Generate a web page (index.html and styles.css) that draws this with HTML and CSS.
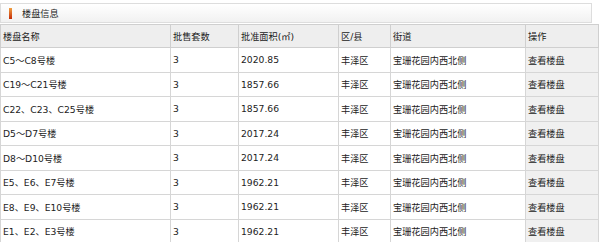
FILE: index.html
```html
<!DOCTYPE html>
<html lang="zh">
<head>
<meta charset="utf-8">
<link rel="stylesheet" href="styles.css">
</head>
<body>
<div class="panel">
  <div class="title"><span class="mark"></span><span class="title-text">楼盘信息</span></div>
  <table class="grid">
    <colgroup>
      <col class="c1"><col class="c2"><col class="c3"><col class="c4"><col class="c5"><col class="c6">
    </colgroup>
    <thead>
      <tr><th>楼盘名称</th><th>批售套数</th><th>批准面积(㎡)</th><th>区/县</th><th>街道</th><th>操作</th></tr>
    </thead>
    <tbody>
      <tr><td>C5～C8号楼</td><td>3</td><td>2020.85</td><td>丰泽区</td><td>宝珊花园内西北侧</td><td class="op">查看楼盘</td></tr>
      <tr><td>C19～C21号楼</td><td>3</td><td>1857.66</td><td>丰泽区</td><td>宝珊花园内西北侧</td><td class="op">查看楼盘</td></tr>
      <tr><td>C22、C23、C25号楼</td><td>3</td><td>1857.66</td><td>丰泽区</td><td>宝珊花园内西北侧</td><td class="op">查看楼盘</td></tr>
      <tr><td>D5～D7号楼</td><td>3</td><td>2017.24</td><td>丰泽区</td><td>宝珊花园内西北侧</td><td class="op">查看楼盘</td></tr>
      <tr><td>D8～D10号楼</td><td>3</td><td>2017.24</td><td>丰泽区</td><td>宝珊花园内西北侧</td><td class="op">查看楼盘</td></tr>
      <tr><td>E5、E6、E7号楼</td><td>3</td><td>1962.21</td><td>丰泽区</td><td>宝珊花园内西北侧</td><td class="op">查看楼盘</td></tr>
      <tr><td>E8、E9、E10号楼</td><td>3</td><td>1962.21</td><td>丰泽区</td><td>宝珊花园内西北侧</td><td class="op">查看楼盘</td></tr>
      <tr><td>E1、E2、E3号楼</td><td>3</td><td>1962.21</td><td>丰泽区</td><td>宝珊花园内西北侧</td><td class="op">查看楼盘</td></tr>
    </tbody>
  </table>
</div>
</body>
</html>
```
FILE: styles.css
```css
html, body {
  margin: 0;
  padding: 0;
  background: #fff;
}
body {
  font-family: "DejaVu Sans", "Noto Sans CJK SC", sans-serif;
  font-size: 9.2px;
  color: #222;
}
.panel {
  width: 598px;
  padding-top: 3px;
}
.title {
  height: 18px;
  margin-right: 6px;
  border: 1px solid #ddd;
  background: linear-gradient(#fff, #f1f1f1);
  display: flex;
  align-items: center;
  gap: 10px;
  padding-left: 8px;
  margin-bottom: 1px;
}
.mark {
  width: 3px;
  height: 11px;
  background: linear-gradient(#f0a040, #c42a08);
}
.title-text {
  color: #222;
}
.grid {
  width: 598px;
  border-collapse: collapse;
  table-layout: fixed;
}
.c1 { width: 170px; }
.c2 { width: 68px; }
.c3 { width: 100px; }
.c4 { width: 52px; }
.c5 { width: 135px; }
.c6 { width: 73px; }
.grid th, .grid td {
  border: 1px solid #d6d6d6;
  text-align: left;
  font-weight: normal;
  padding: 0 0 0 2px;
  white-space: nowrap;
  overflow: hidden;
}
.grid th {
  height: 22px;
  background: #eeeeee;
  border-color: #cfcfcf;
}
.grid td {
  height: 23.5px;
}
.grid td.op {
  background: #f0f0f0;
}
```
